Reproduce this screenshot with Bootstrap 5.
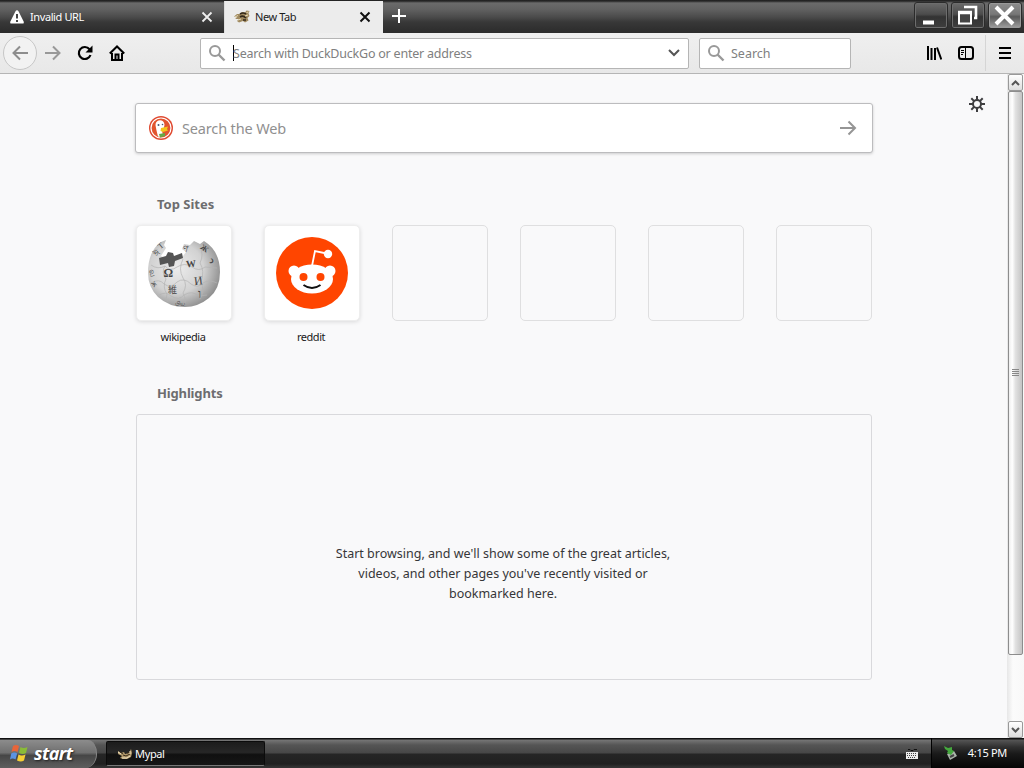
<!DOCTYPE html>
<html lang="en">
<head>
<meta charset="utf-8">
<meta name="viewport" content="width=device-width, initial-scale=1">
<title>New Tab</title>
<link href="https://cdn.jsdelivr.net/npm/bootstrap@5.3.0/dist/css/bootstrap.min.css" rel="stylesheet">
<script src="https://cdn.jsdelivr.net/npm/bootstrap@5.3.0/dist/js/bootstrap.bundle.min.js" defer></script>
<style>
body{width:1024px;height:768px;background:#f9f9fa;font-family:"Noto Sans","Open Sans",sans-serif;font-size:11px;line-height:14px;color:#1a1a1a}
svg{display:block;flex:none}
.tabstrip{height:33px;background:linear-gradient(#222 0,#252525 1px,#6b6b6b 3px,#626262 9px,#4b4b4b 17px,#383838 22px,#2c2c2c 32px)}
.tab-dark{width:224px;color:#fff;padding:1px 11px 0 9px}
.tab-on{width:159px;margin-top:1px;background:#ececec;border-left:1px solid #ddd;padding:0 12px 0 9px}
.tab-title{letter-spacing:-.4px}
.winbtn{width:34px;height:27px;border:1px solid #2b2b2b;border-radius:3px;box-shadow:inset 0 0 0 1px #6d6d6d;background:linear-gradient(#6b6b6b,#4c4c4c 45%,#333 55%,#3e3e3e)}
.winbtn.close-win{background:linear-gradient(#8d8d8d,#777 45%,#595959 55%,#a0a0a0);box-shadow:inset 0 0 0 1px #999}
.toolbar{height:41px;background:linear-gradient(#efefef,#e8e8e8);border-bottom:1px solid #b5b5b5}
.backbtn{width:34px;height:34px;border:1px solid #c7c7c7;border-radius:50%;background:#f2f2f2}
.field{height:31px;background:#fff;border:1px solid #b5b5b5;border-radius:2px;color:#808080;font-size:12.5px}
.field span:not(.caret){padding-top:2px}
.url-text{letter-spacing:-.22px}
.caret{width:1px;height:16px;background:#000}
.page{height:664px}
.content{width:736px;margin-left:136px}
.websearch{width:738px;height:50px;margin:29px 0 0 -1px;background:#fff;border:1px solid #bcbcbe;border-radius:3px;box-shadow:0 1px 3px rgba(0,0,0,.18);padding:0 15px 0 13px;font-size:14.5px;color:#909090}
.web-text{letter-spacing:-.15px}
.heading{font-weight:700;font-size:13px;line-height:18px;color:#6d6d6f;padding-left:21px}
.tile{width:96px;height:96px;border-radius:5px;border:1px solid #dfdfe0}
.tile.site{background:#fff;border-color:#eee;box-shadow:0 1px 4px rgba(0,0,0,.13)}
.tiles{gap:32px}
.site-label{width:94px;text-align:center;margin-top:9px;letter-spacing:-.45px}
.empty-box{height:266px;border:1px solid #d9d9dc;border-radius:3px;padding:129px 2px 0 0;font-size:12.5px;line-height:20px;color:#363638}
.sbar{width:17px;background:linear-gradient(90deg,#e7e7e7,#fbfbfb 35%,#f8f8f8);padding-left:1px}
.sbtn{width:15px;height:17px;border:1px solid #999;border-radius:2px;background:linear-gradient(#fff,#ddd)}
.thumb{width:15px;height:564px;border:1px solid #8d8d8d;border-radius:2px;background:linear-gradient(90deg,#eee,#fff 25%,#e1e1e1 50%,#c4c4c4)}
.taskbar{height:30px;color:#fff;background:linear-gradient(#111 0,#111 1px,#767676 2px,#555 7px,#474747 15px,#262626 16px,#202020 26px,#333 29px)}
.startbtn{width:97px;height:28px;margin-top:2px;padding-left:10px;border-radius:0 9px 12px 0/0 14px 14px 0;border-right:1px solid #888;background:linear-gradient(#8c8c8c,#707070 45%,#464646 55%,#5e5e5e)}
.start-text{font:italic 700 18px/20px "Open Sans","Noto Sans",sans-serif;letter-spacing:-.6px;text-shadow:1px 1px 2px #222;margin-top:-2px}
.task{width:159px;height:25px;margin:3px 0 0 9px;padding-left:10px;border:1px solid #0b0b0b;border-bottom-color:#777;border-radius:2px;background:linear-gradient(#1c1c1c,#272727 45%,#101010 55%,#161616)}
.tray{width:93px;border-left:1px solid #000;background:linear-gradient(#111 0,#111 1px,#555 2px,#303030 9px,#191919 16px,#050505 30px);padding:0 17px 0 10px}
.clock-text{letter-spacing:-.3px}
</style>
</head>
<body class="d-flex flex-column overflow-hidden">
<svg width="0" height="0" class="position-absolute">
  <defs>
    <g id="critter"><path d="M0 7.500 3 5 6 5 8 3 11 3.500 12.500 1.500 15.500 2 14.500 4.500 15.500 7 13.500 9 14.500 11.500 11 13.500 9 12 5 13.500 3 12 5 10 1 10 3 8.500Z" fill="#a08a60"/><path d="M6 5q3-2 6 0M6 8q3-2 6 1M9 11h3" fill="none" stroke="#33291b" stroke-width="1.700"/><path d="M1 8l3-1.500M4 11l3-1M12.500 3.500l2-.5M11 7l3-1" stroke="#e7d9b4"/></g>
    <g id="critter-light"><path d="M1 5l3 2 3-1 1 2 4-1 2-4 1 4-1 4-4 2H6l-3-1 2-2-4-2Z" fill="#b39a6c"/><path d="M6 9l3 1 4-2M3 6l3 2M10 7l3-1" fill="none" stroke="#3a2c1b"/><path d="M1 6l3 2M5 12h5l3-2M13 5v3" fill="none" stroke="#f1e3c2"/></g>
    <g id="lens" fill="none" stroke="#999" stroke-width="2"><circle cx="6" cy="6" r="5"/><path d="M9.500 9.500l6 6" stroke-width="2.400"/></g>
  </defs>
</svg>

<header class="tabstrip d-flex flex-shrink-0">
  <div class="tab-dark d-flex align-items-center">
    <svg width="16" height="16"><path d="M8 1.200q1 0 1.600 1.200l5 10q.8 2.200-1.200 2.200H2.600q-2 0-1.200-2.200l5-10Q7 1.200 8 1.200Z" fill="#fff"/><path d="M8 5v4.500M8 11v2" stroke="#444" stroke-width="2"/></svg>
    <span class="tab-title me-auto" style="margin-left:5px">Invalid URL</span>
    <svg width="12" height="12"><path d="M1.500 1.500l9 9M10.500 1.500l-9 9" stroke="#eee" stroke-width="1.800"/></svg>
  </div>
  <div class="tab-on d-flex align-items-center">
    <svg width="16" height="16"><use href="#critter"/></svg>
    <span class="tab-title me-auto" style="margin-left:5px">New Tab</span>
    <svg width="12" height="12"><path d="M1.500 1.500l9 9M10.500 1.500l-9 9" stroke="#111" stroke-width="2"/></svg>
  </div>
  <svg class="ms-2 mt-2" width="16" height="16"><path d="M8 1v14M1 8h14" stroke="#fff" stroke-width="2"/></svg>
  <div class="d-flex ms-auto" style="gap:3px;margin-top:2px;margin-right:2px">
    <div class="winbtn"><svg width="32" height="25"><path d="M8 19.500h11" stroke="#fff" stroke-width="4"/></svg></div>
    <div class="winbtn"><svg width="32" height="25"><path d="M12 4h12v11h-2" fill="none" stroke="#fff" stroke-width="2.600"/><path d="M7 9.500h12v11H7z" fill="#444" stroke="#fff" stroke-width="2"/><path d="M6 9.500h14" stroke="#fff" stroke-width="3.500"/></svg></div>
    <div class="winbtn close-win"><svg width="32" height="25"><path d="M7 4l17 17M24 4L7 21" stroke="#fff" stroke-width="4"/></svg></div>
  </div>
</header>

<nav class="toolbar d-flex align-items-center flex-shrink-0">
  <div class="backbtn d-flex align-items-center justify-content-center" style="margin-left:3px"><svg width="16" height="16"><path d="M16 8H1.500M8 1.500L1.500 8 8 14.500" fill="none" stroke="#8d8d8d" stroke-width="2"/></svg></div>
  <svg width="16" height="16" style="margin-left:8px"><path d="M0 8h14.500M8 1.500L14.500 8 8 14.500" fill="none" stroke="#989898" stroke-width="2"/></svg>
  <svg width="16" height="16" class="ms-3"><path d="M13.500 10A6 6 0 1 1 12.500 4.200" fill="none" stroke="#000" stroke-width="2.200"/><path d="M15.500 0.500v7h-7Z"/></svg>
  <svg width="16" height="16" class="ms-3"><path d="M0.800 8.500L8 1.500l7.200 7" fill="none" stroke="#000" stroke-width="2"/><path d="M3 8v7h10V8" fill="none" stroke="#000" stroke-width="2"/><path d="M6.500 15V9.500h3V15" fill="none" stroke="#000" stroke-width="2"/></svg>
  <div class="field d-flex align-items-center" style="width:489px;margin-left:75px;padding:0 8px">
    <svg width="17" height="17"><use href="#lens"/></svg>
    <span class="caret" style="margin-left:7px"></span><span class="me-auto url-text" style="margin-left:-1px">Search with DuckDuckGo or enter address</span>
    <svg width="12" height="8"><path d="M1 1l5 5 5-5" fill="none" stroke="#555" stroke-width="2"/></svg>
  </div>
  <div class="field d-flex align-items-center" style="width:152px;margin-left:10px;padding:0 8px">
    <svg width="17" height="17"><use href="#lens"/></svg><span class="find-text" style="margin-left:6px">Search</span>
  </div>
  <svg width="16" height="16" class="ms-auto"><path d="M2 1v14M5.500 3v12M9 3v12M11 2.500L15.300 14.500" fill="none" stroke="#000" stroke-width="2"/></svg>
  <svg width="16" height="16" class="ms-3"><rect x="1" y="2" width="14" height="12" rx="2.500" fill="none" stroke="#000" stroke-width="2"/><path d="M7.500 2v12M3 5.500h3M3 7.500h3M3 9.500h2" stroke="#000"/></svg>
  <div style="width:1px;height:36px;background:#d5d5d5;margin-left:11px"></div>
  <svg width="14" height="14" style="margin:0 12px"><path d="M1 2h12M1 7h12M1 12h12" stroke="#000" stroke-width="2"/></svg>
</nav>

<main class="page d-flex flex-shrink-0">
  <div class="content flex-shrink-0">
    <div class="websearch d-flex align-items-center">
      <svg width="24" height="24"><circle cx="12" cy="12" r="12" fill="#e04b32"/><circle cx="12" cy="12" r="10" fill="#e2552f" stroke="#fff" stroke-width="1.200"/><path d="M9 20.500Q7 13 6.500 9 6.500 5.500 9.500 4.500q5-1 6 4l-.5 3-2 3 1 5q-2 2-5 1Z" fill="#fff"/><path d="M12 12l7-1.500-1 2.500 1 1.500-5 1.500-2.500-1Z" fill="#f5c51b"/><path d="M10 18l6-1v3l-5 1.500Z" fill="#65a846"/><circle cx="9.500" cy="9" r="1" fill="#4a5a75"/><circle cx="13.500" cy="8.500" r=".8" fill="#4a5a75"/></svg>
      <span class="web-text me-auto" style="margin-left:9px">Search the Web</span>
      <svg width="18" height="16"><path d="M1 8h15M9.500 1.500L16 8l-6.500 6.500" fill="none" stroke="#959595" stroke-width="2"/></svg>
    </div>
    <h2 class="heading mb-0" style="margin-top:42px">Top Sites</h2>
    <div class="tiles d-flex" style="margin-top:12px">
      <div>
        <div class="tile site d-flex align-items-center justify-content-center">
          <svg width="74" height="74" viewBox="0 0 74 74">
            <defs><radialGradient id="globe" cx=".4" cy=".42" r=".62"><stop stop-color="#ececec"/><stop offset=".6" stop-color="#d2d2d2"/><stop offset="1" stop-color="#919191"/></radialGradient></defs>
            <path d="M19 4 17 9 19 12 14 20 22 24 36 20 39 16 35 13 37 8 43 9 47 5 53 8 57 5Q73 15 73 36 73 53 62 62 51 71 38 71 22 71 11 61 1 51 1 37 1 15 14 6Z" fill="url(#globe)"/>
            <path d="M12 22l7-2 2-4 5 1 1 3 8-3 1 5-8 3-1 5-5 1-1-4-8 2Z" fill="#555"/>
            <path d="M4 29q7 5 14 1 5 6 12 1 8-5 15 0 7 5 13 0l12 1M4 47q8-5 13 1 7 5 13-2 7-5 14 2 7 5 12-1 6-4 14 0M12 59q7-4 12 1 8 5 13-1 8-5 15 1l8-1M18 30q-4 6 1 13-4 8 1 15-2 5 1 8M36 23q-5 10 0 19 5 7 0 15 4 7 1 13M53 10q4 9 0 17 5 8 1 19 4 9-1 17" fill="none" stroke="#b3b3b3" stroke-width=".7"/>
            <g fill="#454545" font-family="Liberation Serif,serif" font-size="12"><text x="16.500" y="41" font-weight="700">Ω</text><text x="39" y="31" font-size="10" font-weight="700" transform="rotate(-5 44 27)">W</text><text x="47" y="49" font-size="12" transform="rotate(-7 50 46)">И</text><text x="21" y="57" font-family="Noto Sans CJK JP,sans-serif" font-size="9">維</text><text x="51" y="62" font-size="12">ו</text><text x="36" y="16" font-size="9" transform="rotate(15 38 12)">ণ</text><text x="54" y="14" font-size="8" font-weight="700" transform="rotate(35 56 11)">Ж</text><text x="62" y="27" font-size="11">د</text><text x="3" y="38" font-size="8" transform="rotate(75 5 35)">வ</text><text x="4" y="49" font-size="8" transform="rotate(55 6 48)">ж</text><text x="7" y="20" font-size="8" transform="rotate(-45 9 17)">ঈ</text><text x="12" y="13" font-size="8" transform="rotate(-40 13 11)">T</text><text x="28" y="69" font-size="6">பிய</text></g>
          </svg>
        </div>
        <div class="site-label">wikipedia</div>
      </div>
      <div>
        <div class="tile site d-flex align-items-center justify-content-center">
          <svg width="72" height="72"><circle cx="36" cy="36" r="36" fill="#ff4500"/><path d="M36 29l3-15 14 3" fill="none" stroke="#fff" stroke-width="1.800"/><circle cx="52" cy="17" r="4.200" fill="#fff"/><g fill="#fff"><circle cx="18" cy="34" r="5.500"/><circle cx="54" cy="34" r="5.500"/><ellipse cx="36" cy="42" rx="21" ry="14.500"/></g><circle cx="27.500" cy="40" r="4" fill="#ff4500"/><circle cx="44.500" cy="40" r="4" fill="#ff4500"/><path d="M27.500 48q8.500 6 17 0" fill="none" stroke="#111" stroke-width="2"/></svg>
        </div>
        <div class="site-label">reddit</div>
      </div>
      <div class="tile"></div><div class="tile"></div><div class="tile"></div><div class="tile"></div>
    </div>
    <h2 class="heading mb-0" style="margin-top:40px;letter-spacing:-.15px">Highlights</h2>
    <div class="empty-box text-center" style="margin-top:12px">Start browsing, and we'll show some of the great articles,<br>videos, and other pages you've recently visited or<br>bookmarked here.</div>
  </div>
  <svg width="16" height="16" style="margin:22px 0 0 97px"><g fill="none" stroke="#3e3e40" stroke-width="2"><circle cx="8" cy="8" r="4"/><path d="M8 0v4M8 12v4M0 8h4M12 8h4M2.300 2.300l2.800 2.800M10.900 10.900l2.800 2.800M13.700 2.300l-2.800 2.800M5.100 10.900l-2.800 2.800"/></g></svg>
  <div class="sbar ms-auto d-flex flex-column">
    <div class="sbtn flex-shrink-0 d-flex align-items-center justify-content-center"><svg width="9" height="6"><path d="M1 5l3.500-3.500L8 5" fill="none" stroke="#555" stroke-width="2"/></svg></div>
    <div class="thumb flex-shrink-0 d-flex align-items-center justify-content-center"><svg width="7" height="8"><path d="M0 .5h7M0 2.500h7M0 4.500h7M0 6.500h7" stroke="#888"/></svg></div>
    <div class="sbtn mt-auto d-flex align-items-center justify-content-center"><svg width="9" height="6"><path d="M1 1l3.500 3.500L8 1" fill="none" stroke="#555" stroke-width="2"/></svg></div>
  </div>
</main>

<footer class="taskbar d-flex flex-shrink-0">
  <div class="startbtn d-flex align-items-center">
    <svg width="19" height="18" style="margin-top:-3px"><path d="M3 2q3-2 6 0L7.500 8q-3-2-6 0Z" fill="#e8653a"/><path d="M10.500 3q3 2 7 0L16 9q-3 2-7 0Z" fill="#8abb38"/><path d="M1.200 9.500q3-2 6 0L5.500 15.500q-3-2-5.500 0Z" fill="#5b93e2"/><path d="M8.500 10.500q3 2 7 0L14 16.500q-3 2-7 0Z" fill="#f6cf35"/></svg>
    <span class="start-text" style="margin-left:5px">start</span>
  </div>
  <div class="task d-flex align-items-center"><svg width="16" height="16"><use href="#critter-light"/></svg><span class="task-text" style="margin-left:2px;letter-spacing:-.35px">Mypal</span></div>
  <svg class="ms-auto" width="14" height="14" style="margin:9px 12px 0 0"><path d="M3 2.500h2l1 1h2l1-1h3" fill="none" stroke="#111"/><path d="M1 5h12v7H1z" fill="#eee"/><path d="M2 6.500h10M2 8.500h10M3 10.500h8" stroke="#444" stroke-dasharray="1 1"/></svg>
  <div class="tray d-flex align-items-center">
    <svg width="16" height="16"><path d="M5 9l7-3 3 5-7 4Z" fill="#aab4aa"/><path d="M8 12l4-2" stroke="#444" stroke-width="2"/><path d="M2 1l4 2 4-1v3l2 1-3 4-4-2 1-2-3-2Z" fill="#45a83e"/></svg>
    <span class="clock-text text-nowrap ms-auto">4:15 PM</span>
  </div>
</footer>
</body>
</html>
